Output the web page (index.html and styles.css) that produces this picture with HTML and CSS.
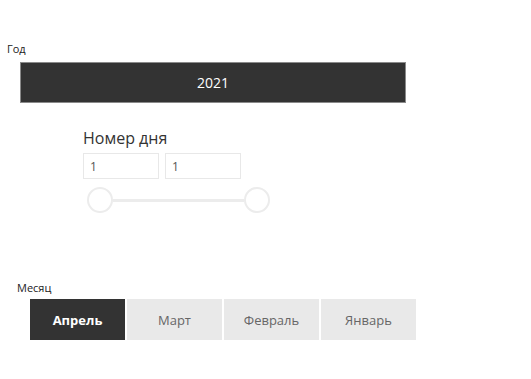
FILE: index.html
```html
<!DOCTYPE html>
<html lang="ru">
<head>
    <meta charset="UTF-8">
    <title>Фильтры</title>
    <link rel="stylesheet" href="styles.css">
</head>
<body>
    <div class="year-slicer">
        <div class="slicer-title">Год</div>
        <div class="year-bar">2021</div>
    </div>

    <div class="day-slicer">
        <div class="day-title">Номер дня</div>
        <div class="day-inputs">
            <input type="text" class="day-input" value="1">
            <input type="text" class="day-input" value="1">
        </div>
        <div class="range">
            <span class="thumb"></span>
            <span class="track"></span>
            <span class="thumb"></span>
        </div>
    </div>

    <div class="month-slicer">
        <div class="slicer-title">Месяц</div>
        <div class="month-buttons">
            <button class="month active">Апрель</button>
            <button class="month">Март</button>
            <button class="month">Февраль</button>
            <button class="month">Январь</button>
        </div>
    </div>
</body>
</html>
```

FILE: styles.css
```css
body {
    font-family: 'Open Sans', 'Noto Sans', sans-serif;
    background-color: #FFFFFF;
    color: #333;
    margin: 0;
    width: 531px;
    height: 379px;
}

.slicer-title {
    font-size: 11px;
    line-height: 14px;
    color: #222;
}

.year-slicer {
    padding: 42px 0 0 7px;
}

.year-bar {
    margin: 6px 0 0 13px;
    width: 384px;
    height: 39px;
    background: #333333;
    border: 1px solid #8a8a8a;
    color: #fff;
    font-size: 14px;
    display: flex;
    align-items: center;
    justify-content: center;
}

.day-slicer {
    padding: 24px 0 0 83px;
}

.day-title {
    font-size: 16px;
    line-height: 22px;
    color: #333;
}

.day-inputs {
    display: flex;
    gap: 6px;
    margin-top: 4px;
}

.day-input {
    width: 76px;
    height: 26px;
    box-sizing: border-box;
    border: 1px solid #e8e8e8;
    padding: 0 6px;
    font-family: inherit;
    font-size: 12px;
    color: #555;
    outline: none;
}

.range {
    display: flex;
    align-items: center;
    margin: 8px 0 0 4px;
    width: 183px;
}

.thumb {
    width: 22px;
    height: 22px;
    border: 2px solid #ececec;
    border-radius: 50%;
    background: #fff;
    flex-shrink: 0;
}

.track {
    flex: 1;
    height: 3px;
    background: #ececec;
}

.month-slicer {
    padding: 68px 0 0 17px;
}

.month-buttons {
    display: flex;
    gap: 2px;
    margin: 4px 0 0 13px;
}

.month {
    width: 95px;
    height: 41px;
    border: none;
    background: #e9e9e9;
    color: #666;
    font-family: inherit;
    font-size: 13px;
    padding: 0;
}

.month.active {
    background: #333333;
    color: #fff;
    font-weight: bold;
}
```
